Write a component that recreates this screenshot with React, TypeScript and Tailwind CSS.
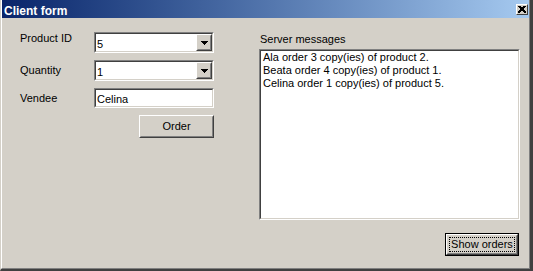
import React from "react";

function Sunken({ className = "", children }: { className?: string; children?: React.ReactNode }) {
  return (
    <div className={`border border-[#808080] border-r-white border-b-white ${className}`}>
      <div className="h-full w-full border border-[#404040] border-r-[#d4d0c8] border-b-[#d4d0c8] bg-white">
        {children}
      </div>
    </div>
  );
}

function Raised({ className = "", children }: { className?: string; children?: React.ReactNode }) {
  return (
    <div className={`border border-white border-r-[#404040] border-b-[#404040] bg-[#d4d0c8] ${className}`}>
      <div className="h-full w-full border border-[#d4d0c8] border-r-[#808080] border-b-[#808080] flex items-center justify-center">
        {children}
      </div>
    </div>
  );
}

function Arrow() {
  return (
    <svg width="7" height="4" viewBox="0 0 7 4" shapeRendering="crispEdges">
      <rect x="0" y="0" width="7" height="1" fill="#000" />
      <rect x="1" y="1" width="5" height="1" fill="#000" />
      <rect x="2" y="2" width="3" height="1" fill="#000" />
      <rect x="3" y="3" width="1" height="1" fill="#000" />
    </svg>
  );
}

function Combo({ value }: { value: string }) {
  return (
    <Sunken className="w-[120px] h-[21px]">
      <div className="flex h-full">
        <div className="flex-1 pl-[1px] pt-[4px] leading-[13px]">{value}</div>
        <Raised className="w-[16px] h-full">
          <Arrow />
        </Raised>
      </div>
    </Sunken>
  );
}

export default function App() {
  return (
    <div className="w-[533px] h-[271px] bg-[#d4d0c8] border-l border-l-[#d4d0c8] border-r-[3px] border-r-[#404040] border-b-[2px] border-b-[#404040] text-[11px] text-black [font-family:'Liberation_Sans',Arial,sans-serif]">
      <div className="h-full flex flex-col border-l border-l-white border-r border-r-[#808080] border-b border-b-[#808080]">
        <div className="h-[18px] flex items-start justify-between bg-linear-to-r from-[#0a246a] to-[#a6caf0]">
          <div className="pl-[2px] pt-[4px] leading-[14px] text-[12px] font-bold text-white">Client form</div>
          <div className="mt-[4px] mr-[1px] w-[12px] h-[11px] border border-white border-r-[#404040] border-b-[#404040] bg-[#d4d0c8] flex items-center justify-center">
            <svg width="8" height="7" viewBox="0 0 8 7" shapeRendering="crispEdges">
              <path d="M0.5 0 L7.5 7 M1.5 0 L8 6.5 M7.5 0 L0.5 7 M6.5 0 L0 6.5" stroke="#000" strokeWidth="1" fill="none" />
            </svg>
          </div>
        </div>
        <div className="flex-1 flex pl-[18px] pt-[14px]">
          <div className="flex flex-col w-[194px]">
            <div className="flex h-[21px]">
              <div className="w-[74px] leading-[13px]">Product ID</div>
              <Combo value="5" />
            </div>
            <div className="flex h-[21px] mt-[7px]">
              <div className="w-[74px] leading-[13px] pt-[4px]">Quantity</div>
              <Combo value="1" />
            </div>
            <div className="flex h-[20px] mt-[7px]">
              <div className="w-[74px] leading-[13px] pt-[4px]">Vendee</div>
              <Sunken className="w-[120px] h-[20px]">
                <div className="pl-[1px] pt-[3px] leading-[13px]">Celina</div>
              </Sunken>
            </div>
            <Raised className="self-end mt-[7px] w-[75px] h-[23px]">
              <span className="leading-[13px]">Order</span>
            </Raised>
          </div>
          <div className="ml-[45px] flex flex-col">
            <div className="mt-[1px] ml-[1px] leading-[13px]">Server messages</div>
            <Sunken className="mt-[3px] w-[261px] h-[171px]">
              <div className="pl-[2px] leading-[13px]">
                <div>Ala order 3 copy(ies) of product 2.</div>
                <div>Beata order 4 copy(ies) of product 1.</div>
                <div>Celina order 1 copy(ies) of product 5.</div>
              </div>
            </Sunken>
            <div className="self-end mr-[1px] mt-[13px] w-[74px] h-[23px] border border-black">
              <Raised className="w-full h-full">
                <div className="border border-dotted border-black w-[66px] h-[15px] flex items-center justify-center leading-[13px] whitespace-nowrap">
                  Show orders
                </div>
              </Raised>
            </div>
          </div>
        </div>
      </div>
    </div>
  );
}
